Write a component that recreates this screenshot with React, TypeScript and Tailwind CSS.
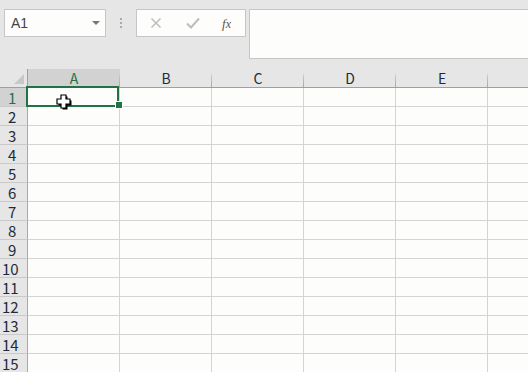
import React from 'react';

const cols = ['A', 'B', 'C', 'D', 'E'];
const rows = Array.from({ length: 15 }, (_, i) => i + 1);

const headFont = { fontFamily: '"Noto Sans CJK JP", "Noto Sans", sans-serif' };

// white plus cursor with a dark drop shadow
function Cursor() {
  return (
    <svg width="18" height="18" viewBox="0 0 18 18" className="absolute left-[55px] top-[24px]">
      <path d="M6 2h5v4h4v5h-4v4H6v-4H2V6h4z" transform="translate(1.5 1.5)" fill="#000" />
      <path d="M6 2h5v4h4v5h-4v4H6v-4H2V6h4z" fill="#fff" stroke="#000" strokeWidth="1.2" />
    </svg>
  );
}

export default function App() {
  return (
    <div className="w-[528px] h-[372px] overflow-hidden bg-[#e6e6e6] select-none" style={headFont}>
      {/* formula bar */}
      <div className="h-[69px] flex items-start pt-[9px] pl-[4px]">
        <div className="w-[102px] h-[28px] bg-[#fdfdfb] border border-[#c6c6c6] flex items-center justify-between pl-[6px] pr-[5px]">
          <span className="text-[14px] text-[#444] font-['Liberation_Sans',sans-serif]">A1</span>
          <span className="w-0 h-0 border-l-[4px] border-r-[4px] border-t-[4px] border-l-transparent border-r-transparent border-t-[#777]" />
        </div>
        <div className="w-[30px] h-[28px] flex flex-col items-center justify-center gap-[2px]">
          <span className="w-[2px] h-[2px] bg-[#aaa]" />
          <span className="w-[2px] h-[2px] bg-[#aaa]" />
          <span className="w-[2px] h-[2px] bg-[#aaa]" />
        </div>
        <div className="w-[110px] h-[28px] bg-[#fdfdfb] border border-[#c6c6c6] flex items-center">
          <svg width="12" height="12" viewBox="0 0 12 12" className="ml-[13px]">
            <path d="M1.5 1.5l9 9M10.5 1.5l-9 9" stroke="#bdbdbd" strokeWidth="1.5" />
          </svg>
          <svg width="14" height="12" viewBox="0 0 14 12" className="ml-[24px]">
            <path d="M1 6.5l4 4L13 1.5" stroke="#bdbdbd" strokeWidth="2" fill="none" />
          </svg>
          <span className="ml-[22px] text-[13px] italic text-[#555] font-['Liberation_Serif',serif] leading-none">
            f<span className="text-[12px]">x</span>
          </span>
        </div>
        <div className="ml-[3px] flex-1 h-[50px] bg-[#fdfdfb] border-t border-b border-l border-[#c6c6c6]" />
      </div>

      {/* sheet */}
      <div className="relative bg-[#fdfdfb]">
        <div className="grid grid-cols-[28px_repeat(5,92px)_1fr]">
          <div className="h-[19px] bg-[#e6e6e6] border-b border-r border-[#9f9f9f] flex items-end justify-end pr-[3px] pb-[3px]">
            <span className="w-[10px] h-[10px] bg-[#c8c8c8] [clip-path:polygon(100%_0,100%_100%,0_100%)]" />
          </div>
          {cols.map((c, i) => (
            <div
              key={c}
              className={
                'h-[19px] border-b border-[#9f9f9f] flex items-center justify-center text-[14px] bg-no-repeat bg-right bg-[length:1px_100%] bg-[linear-gradient(to_bottom,transparent_20%,#c2c2c2_45%,#a8a8a8)] ' +
                (i === 0 ? 'bg-[#d2d2d2] text-[#217346]' : 'bg-[#e6e6e6] text-[#1e2b3c]')
              }
            >
              {c}
            </div>
          ))}
          <div className="h-[19px] bg-[#e6e6e6] border-b border-[#9f9f9f]" />

          {rows.map((r) => (
            <React.Fragment key={r}>
              <div
                className={
                  'h-[19px] border-b border-r border-b-[#c9c9c9] border-r-[#a8a8a8] flex items-center text-[15px] leading-none ' +
                  (r === 1 ? 'bg-[#d2d2d2] text-[#217346] pl-[8px]' : r < 10 ? 'bg-[#e6e6e6] text-[#1e2b3c] pl-[8px]' : 'bg-[#e6e6e6] text-[#1e2b3c] pl-[2px]')
                }
              >
                {r}
              </div>
              {cols.map((c) => (
                <div key={c} className="h-[19px] border-b border-r border-[#d4d4d4]" />
              ))}
              <div className="h-[19px] border-b border-[#d4d4d4]" />
            </React.Fragment>
          ))}
        </div>

        {/* selection */}
        <div className="absolute left-[26px] top-[17px] w-[93px] h-[21px] border-2 border-[#217346]" />
        <div className="absolute left-[116px] top-[33px] w-[6px] h-[6px] bg-[#217346] outline outline-1 outline-white" />
        <Cursor />
      </div>
    </div>
  );
}
